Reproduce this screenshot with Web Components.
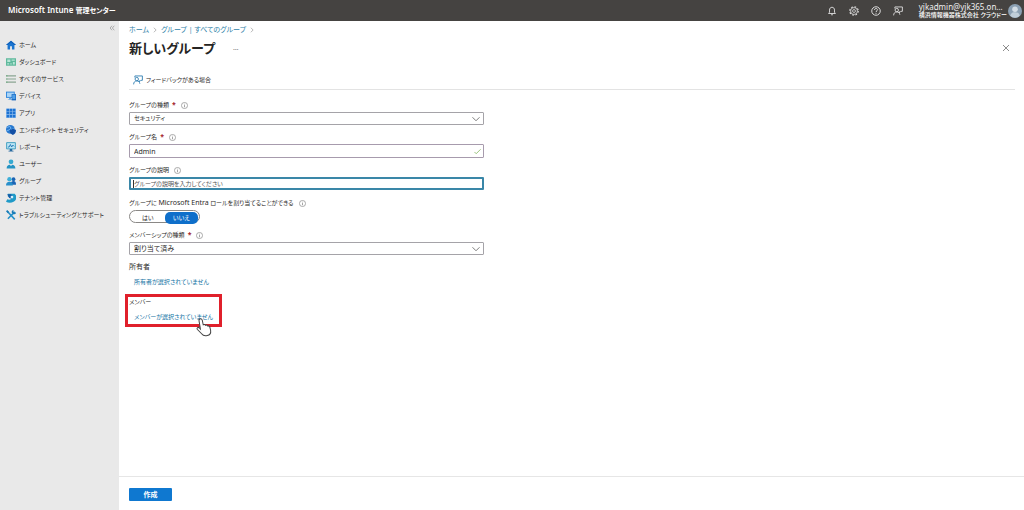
<!DOCTYPE html>
<html lang="ja">
<head>
<meta charset="utf-8">
<title>新しいグループ - Microsoft Intune 管理センター</title>
<style>
html,body{margin:0;height:100%}
body{--small:6px;font-family:"Noto Sans","Noto Sans CJK JP",sans-serif;font-size:7px;line-height:12px;color:#2b2a29;background:#fff;font-feature-settings:"palt"}
</style>
</head>
<body>
<intune-app></intune-app>
<script>
const base = `*,::before{box-sizing:border-box}a{color:inherit;text-decoration:none}
button,input,select{font:inherit;font-feature-settings:inherit;color:inherit;margin:0}
button{background:none;border:0;padding:0;display:flex;align-items:center;cursor:pointer}`;

function define(name, css, html) {
  customElements.define(name, class extends HTMLElement {
    connectedCallback() {
      if (this.shadowRoot) return;
      const root = this.attachShadow({mode: 'open'});
      const markup = typeof html === 'function' ? html(this) : html;
      root.innerHTML = `<style>${base}${css}</style>${markup}`;
    }
  });
}

const icons = {
  home: '<path d="M8 1 0 8h2.500v7h4v-5h3v5h4V8H16z" fill="#1b75d0"/><path d="M8 1 0 8h2.500L8 3.500 13.500 8H16z" fill="#0f5fb8"/>',
  dashboard: '<rect y="2" width="16" height="12" fill="#5fb99c"/><path d="M2 4h5v4H2zM9 4h5v2H9zM2 10h3v2H2zM7 10h2v2H7zM11 8h3v4h-3z" fill="#b8e6d6"/>',
  services: '<path d="M0 3h3M0 8h3M0 13h3" stroke="#5f9b72" stroke-width="1.700"/><path d="M3 3h13M3 8h13M3 13h13" stroke="#8aa593" stroke-width="1.700"/>',
  devices: '<path d="M0 1h14v10H0z" fill="#2f86dc"/><path d="M1.500 2.500h11v7h-11z" fill="#a9d4f6"/><path d="M5 11h3v2h2v1H3v-1h2z" fill="#5ba3e4"/><rect x="9" y="5" width="7" height="10" fill="#1464bd"/><rect x="10" y="6" width="5" height="7" fill="#4e9fe8"/>',
  apps: '<path d="M0 1h16v15H0z" fill="#8fbcec"/><path d="M1 1h4v4H1zM6 1h4v4H6zM11 1h4v4h-4zM1 6h4v4H1zM6 6h4v4H6zM11 6h4v4h-4zM1 11h4v4H1zM6 11h4v4H6zM11 11h4v4h-4z" fill="#1d72d2"/>',
  security: '<circle cx="7" cy="7" r="7" fill="#2879d0"/><path d="M2 4 6 2l2 3-3 3-4 1M8 8l4-2" stroke="#79baf2" stroke-width="1.500" fill="none"/><path d="M11 6c2 1.500 3 1.500 5 1.500 0 4-1 6.500-5 8.500-4-2-5-4.500-5-8.500 2 0 3 0 5-1.500z" fill="#124fa5"/>',
  report: '<path d="M1 1h14v10H1z" fill="#bce5f4" stroke="#3197bd" stroke-width="1.400"/><path d="M3 8h2l2-4 2 4 2-3 2 2" fill="none" stroke="#1670b3" stroke-width="1.400"/><path d="M6 11h4v3h2v1H4v-1h2z" fill="#286aa0"/>',
  user: '<circle cx="8" cy="4.500" r="3.800" fill="#35a9d1"/><path d="M1 15c0-4 2.500-6 5-6l2 2 2-2c2.500 0 5 2 5 6z" fill="#2493c3"/>',
  group: '<circle cx="12" cy="5" r="3" fill="#1a64b5"/><path d="M7 14c0-4 2-6 5-6s4 2 4 6z" fill="#1a64b5"/><circle cx="5.500" cy="5" r="3.500" fill="#3daed8"/><path d="M0 15c0-4 2-6 5.500-6S11 11 11 15z" fill="#278fcb"/>',
  tenant: '<path d="M3 1h11l2 3v6c-2 5-10 7-16 4l2-4c4 2 7 0 7-4H3z" fill="#209ac8"/><path d="M2 2h6l3 3-2 4-4-1z" fill="#155da8"/><circle cx="9.500" cy="6.500" r="2.200" fill="#d7f2fa"/>',
  tools: '<path d="m2 2 12 13M14 3 3 14" stroke="#2591c9" stroke-width="2.500"/><path d="M0 2 2 0l3 3-2 2zM12 0v3l1 1h3c0 2-2 4-5 2L9 4c0-2 1-4 3-4z" fill="#187bb6"/>',
  bell: '<path d="M2.500 12h11L12 10V6.500C12 4 10.500 2 8 2S4 4 4 6.500V10zM6.500 14h3" fill="none" stroke="currentColor" stroke-width="1.400"/>',
  gear: '<circle cx="8" cy="8" r="5.500" fill="none" stroke="currentColor" stroke-width="1.200"/><circle cx="8" cy="8" r="6.800" fill="none" stroke="currentColor" stroke-width="1.700" stroke-dasharray="2.700 2.640"/><circle cx="8" cy="8" r="2.300" fill="none" stroke="currentColor" stroke-width="1.200"/>',
  help: '<circle cx="8" cy="8" r="6.800" fill="none" stroke="currentColor" stroke-width="1.500"/><path d="M5.700 6.300C5.700 3 10.300 3.200 10.300 6c0 1.600-2.300 1.700-2.300 3.700M8 11v1.500" fill="none" stroke="currentColor" stroke-width="1.500"/>',
  feedback: '<g fill="none" stroke="currentColor" stroke-width="1.400"><path d="M3 4V1.500h12v7h-2.500L10 11V8.500"/><circle cx="6" cy="6.500" r="2.700"/><path d="M1 15c0-3.500 2-5.500 5-5.500S10.500 11 11 14"/></g>',
  info: '<circle cx="8" cy="8" r="7" fill="none" stroke="currentColor" stroke-width="1.200"/><path d="M8 7v5M8 4v1.600" stroke="currentColor" stroke-width="1.400"/>',
  close: '<path d="m2 2 12 12M14 2 2 14" stroke="currentColor" stroke-width="1.500"/>',
  chevron: '<path d="m1 4.500 7 7 7-7" fill="none" stroke="currentColor" stroke-width="1.700"/>',
  next: '<path d="m5 2 6 6-6 6" fill="none" stroke="currentColor" stroke-width="1.600"/>',
  collapse: '<path d="M8 2 3 8l5 6M14 2 9 8l5 6" fill="none" stroke="currentColor" stroke-width="1.700"/>',
  check: '<path d="m1 9 4 4L15 3" fill="none" stroke="currentColor" stroke-width="2"/>',
  avatar: '<circle cx="8" cy="8" r="8" fill="#8ba0b3"/><circle cx="8" cy="6" r="3.200" fill="#d3dde5"/><path d="M2.500 13.500c1-3.500 3-4 5.500-4s4.500.500 5.500 4A8 8 0 0 1 2.500 13.500z" fill="#c0ced9"/>',
  hand: '<path d="M5 .700c1 0 1.300.700 1.500 1.500L7.300 6c1-.600 1.700-.200 2 .500 1-.500 1.600 0 1.900.600 1-.300 1.700.100 2 1l.700 3c.300 2-.700 4-3 4.500-2.200.500-3.900 0-5-1.600L2 10c-.700-1.300.800-2.200 1.800-1.200l1 1L3.600 2.500C3.400 1.500 4 .700 5 .700z" fill="#fff" stroke="#444" stroke-width=".900"/>'
};
define('ui-icon', ':host{display:block;flex:none;width:10px;height:10px}svg{display:block;width:100%;height:100%}',
  e => `<svg viewBox="0 0 16 16" aria-hidden="true">${icons[e.getAttribute('name')]}</svg>`);

define('app-header', `:host{display:flex;align-items:center;height:21px;background:#454341;color:#fff;padding:0 2px 0 8px}
.brand{font-size:8px;font-weight:600;flex:1;white-space:nowrap}.brand span{font-size:7px}
nav{display:flex;gap:12px;margin-right:16px;color:#e4e4e4}
.account{display:flex;align-items:center;gap:1px}
.name{min-width:87px;white-space:nowrap}
.mail{font-size:8px;line-height:10px;color:#eee}.org{font-size:6px;line-height:7px;font-weight:500}
.account ui-icon{width:14px;height:14px}`,
`<span class="brand">Microsoft Intune <span>管理センター</span></span>
<nav><button aria-label="通知"><ui-icon name="bell"></ui-icon></button><button aria-label="設定"><ui-icon name="gear"></ui-icon></button><button aria-label="ヘルプ"><ui-icon name="help"></ui-icon></button><button aria-label="フィードバック"><ui-icon name="feedback"></ui-icon></button></nav>
<div class="account"><div class="name"><div class="mail">yjkadmin@yjk365.on…</div><div class="org">横浜情報機器株式会社 クラウドー</div></div><ui-icon name="avatar"></ui-icon></div>`);

define('nav-item', `:host{display:block}a{display:flex;align-items:center;gap:3px;height:17px;padding-left:6px;white-space:nowrap}`,
  e => `<a href="#"><ui-icon name="${e.getAttribute('icon')}"></ui-icon><span><slot></slot></span></a>`);

define('side-nav', `:host{display:block;width:119px;flex:none;background:#e9e9e9;font-size:var(--small)}
button{margin:3px 4px 4px auto;color:#888}button ui-icon{width:6px;height:8px}`,
`<button aria-label="折りたたむ"><ui-icon name="collapse"></ui-icon></button>
<nav><nav-item icon="home">ホーム</nav-item><nav-item icon="dashboard">ダッシュボード</nav-item><nav-item icon="services">すべてのサービス</nav-item><nav-item icon="devices">デバイス</nav-item><nav-item icon="apps">アプリ</nav-item><nav-item icon="security">エンドポイント セキュリティ</nav-item><nav-item icon="report">レポート</nav-item><nav-item icon="user">ユーザー</nav-item><nav-item icon="group">グループ</nav-item><nav-item icon="tenant">テナント管理</nav-item><nav-item icon="tools">トラブルシューティングとサポート</nav-item></nav>`);

define('page-head', `:host{display:block;padding:3px 9px 0 10px}
.crumbs{display:flex;align-items:center;gap:3px;color:#2f7fa8}.crumbs ui-icon{width:6px;height:6px;color:#888}
.title{display:flex;align-items:center;height:24px;padding-right:5px}
h1{font-size:13px;line-height:20px;font-weight:700;margin:0;color:#252423}
.more{margin-left:18px;color:#777}.close{margin-left:auto;color:#666}.close ui-icon{width:8px;height:8px}
.bar{display:flex;height:30px;padding:11px 4px 0;border-bottom:1px solid #e3e3e3}
.bar button{gap:3px;height:18px;font-size:var(--small)}.bar ui-icon{color:#2b7cb0}`,
`<nav class="crumbs"><a href="#">ホーム</a><ui-icon name="next"></ui-icon><a href="#">グループ | すべてのグループ</a><ui-icon name="next"></ui-icon></nav>
<div class="title"><h1>新しいグループ</h1><button class="more" aria-label="その他">…</button><button class="close" aria-label="閉じる"><ui-icon name="close"></ui-icon></button></div>
<div class="bar"><button><ui-icon name="feedback"></ui-icon>フィードバックがある場合</button></div>`);

const label = e => `<label for="f"><span>${e.getAttribute('label')}</span>${e.hasAttribute('required') ? '<b>*</b>' : ''}<ui-icon name="info"></ui-icon></label>`;
const fieldCss = `:host{display:block}label{display:flex;align-items:center;height:12px;gap:3px;margin-bottom:1px;white-space:nowrap;font-size:var(--small)}
b{color:#a4262c;font-size:7px}label ui-icon{width:7px;height:7px;margin-left:2px;color:#666}
.box{display:grid;align-items:center}.box>*{grid-area:1/1}.box ui-icon{justify-self:end;margin-right:4px;width:8px;height:8px;color:#666;pointer-events:none}
input,select{width:100%;display:block;border:1px solid #a5a3a8;border-radius:1px;padding:0 4px;background:#fff;outline:0;line-height:11px}
select{height:13px;appearance:none}:host([compact]) select{font-size:var(--small)}input{height:14px}`;

define('select-field', fieldCss, e => `${label(e)}<div class="box"><select id="f"><option>${e.getAttribute('value')}</option></select><ui-icon name="chevron"></ui-icon></div>`);
define('text-field', fieldCss + `input{border-color:#a79bad}:host([active]) input{border:2px solid #3a87a8;padding:0 3px;height:13px;margin-bottom:1px;font-size:var(--small)}input::placeholder{color:#555;opacity:1}.box ui-icon{width:7px;height:7px;color:#8dbb6c;margin-right:3px}
.caret{width:1px;height:8px;background:#333;margin-left:4px}`,
 e => `${label(e)}<div class="box"><input id="f" value="${e.getAttribute('value') || ''}" placeholder="${e.getAttribute('placeholder') || ''}">${e.hasAttribute('valid') ? '<ui-icon name="check"></ui-icon>' : ''}${e.hasAttribute('active') ? '<i class="caret"></i>' : ''}</div>`);

define('toggle-field', `:host{display:block}fieldset{border:0;padding:0;margin:0;min-width:0}
legend{display:flex;align-items:center;gap:5px;height:12px;padding:0;margin-bottom:1px;white-space:nowrap;font-size:var(--small)}legend span span{font-size:7px}legend ui-icon{width:7px;height:7px;color:#666}
.switch{display:grid;grid-template-columns:1fr 1fr;width:71px;height:13px;border:1px solid #8a8886;border-radius:7px;padding:1px}
label{position:relative;display:flex;align-items:center;justify-content:center;border-radius:5px;font-size:var(--small)}
input{position:absolute;inset:0;width:100%;height:100%;opacity:0}
label:has(:checked){background:#0f6fca;color:#fff}`,
`<fieldset><legend><span>グループに <span>Microsoft Entra</span> ロールを割り当てることができる</span><ui-icon name="info"></ui-icon></legend>
<div class="switch"><label><input type="radio" name="role">はい</label><label><input type="radio" name="role" checked>いいえ</label></div></fieldset>`);

define('picker-field', `:host{display:block;position:relative}div{height:12px;margin-bottom:3px}a{display:block;width:max-content;margin-left:5px;color:#1272a3;font-size:var(--small)}
:host([highlight]) div{font-size:var(--small)}
:host([highlight])::before{content:"";position:absolute;box-sizing:border-box;inset:-2px auto -4px -4px;width:97px;border:3px solid #e0202b}
ui-icon{position:absolute;left:66px;top:21px;width:18px;height:20px}`,
 e => `<div>${e.getAttribute('label')}</div><a href="#"><slot></slot></a>${e.hasAttribute('highlight') ? '<ui-icon name="hand"></ui-icon>' : ''}`);

define('group-form', `:host{display:block;flex:1;padding:9px 10px}
form{display:flex;flex-direction:column;gap:6px;width:41%;max-width:355px;min-width:240px}.people{display:grid;gap:8px}`,
`<form><select-field label="グループの種類" required compact value="セキュリティ"></select-field>
<text-field label="グループ名" required value="Admin" valid></text-field>
<text-field label="グループの説明" placeholder="グループの説明を入力してください" active></text-field>
<toggle-field></toggle-field>
<select-field label="メンバーシップの種類" required value="割り当て済み"></select-field>
<div class="people"><picker-field label="所有者">所有者が選択されていません</picker-field>
<picker-field label="メンバー" highlight>メンバーが選択されていません</picker-field></div></form>`);

define('page-footer', `:host{display:block;border-top:1px solid #e6e6e6;padding:11px 10px 9px}
button{justify-content:center;width:43px;height:13px;background:#0f78d0;color:#fff;font-weight:600;border-radius:1px}`, `<button>作成</button>`);

define('intune-app', `:host{display:flex;flex-direction:column;min-height:100vh}.body{flex:1;display:flex}
main{flex:1;min-width:0;display:flex;flex-direction:column}`,
`<app-header></app-header><div class="body"><side-nav></side-nav><main><page-head></page-head><group-form></group-form><page-footer></page-footer></main></div>`);
</script>
</body>
</html>
